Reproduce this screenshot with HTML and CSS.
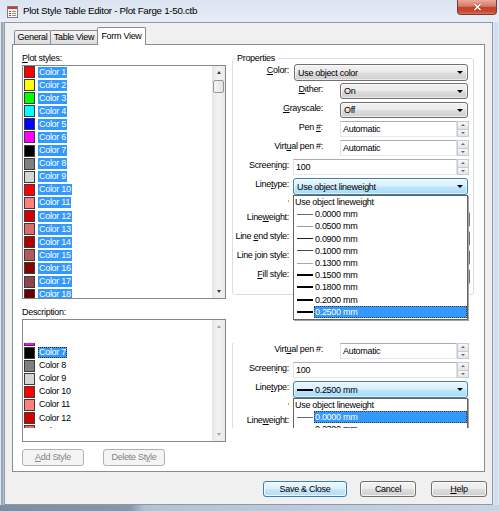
FILE: index.html
```html
<!DOCTYPE html>
<html lang="en">
<head>
<meta charset="utf-8">
<title>Plot Style Table Editor</title>
<link rel="stylesheet" href="styles.css">
</head>
<body>
<div class="window">
  <div class="titlebar">
    <svg class="app-icon" width="11" height="12" viewBox="0 0 11 12">
      <rect x="0.5" y="0.5" width="10" height="11" fill="#f7f7f7" stroke="#7d7d7d"/>
      <rect x="1" y="1" width="9" height="2" fill="#d0392a"/>
      <rect x="2" y="5" width="2" height="1" fill="#d0392a"/>
      <rect x="5" y="5" width="4" height="1" fill="#8f8f8f"/>
      <rect x="2" y="7" width="2" height="1" fill="#d0392a"/>
      <rect x="5" y="7" width="4" height="1" fill="#8f8f8f"/>
      <rect x="2" y="9" width="2" height="1" fill="#d0392a"/>
      <rect x="5" y="9" width="4" height="1" fill="#8f8f8f"/>
    </svg>
    <span class="title">Plot Style Table Editor - Plot Farge 1-50.ctb</span>
    <div class="close-btn">
      <svg width="9" height="8" viewBox="0 0 9 8"><path d="M1.5 1 L7.5 7 M7.5 1 L1.5 7" stroke="#7a2a1e" stroke-width="3" stroke-opacity="0.45"/><path d="M1.5 1 L7.5 7 M7.5 1 L1.5 7" stroke="#ffffff" stroke-width="1.6"/></svg>
    </div>
  </div>
  <div class="frame-row">
    <div class="frame-left"></div>
    <div class="client">
      <div class="tabs">
        <div class="tab tab-general">General</div>
        <div class="tab tab-table">Table View</div>
        <div class="tab tab-active">Form View</div>
      </div>
      <div class="panel">
        <div class="col-left">
          <div class="lbl"><u>P</u>lot styles:</div>
          <div class="listbox lb-main">
            <div class="list-items">
              <div class="item"><span class="sw" style="background:#ff0000"></span><span class="it sel">Color 1</span></div>
              <div class="item"><span class="sw" style="background:#ffff00"></span><span class="it sel">Color 2</span></div>
              <div class="item"><span class="sw" style="background:#00ff00"></span><span class="it sel">Color 3</span></div>
              <div class="item"><span class="sw" style="background:#00ffff"></span><span class="it sel">Color 4</span></div>
              <div class="item"><span class="sw" style="background:#0000ff"></span><span class="it sel">Color 5</span></div>
              <div class="item"><span class="sw" style="background:#ff00ff"></span><span class="it sel">Color 6</span></div>
              <div class="item"><span class="sw" style="background:#000000"></span><span class="it sel">Color 7</span></div>
              <div class="item"><span class="sw" style="background:#808080"></span><span class="it sel">Color 8</span></div>
              <div class="item"><span class="sw" style="background:#d6d6d6"></span><span class="it sel">Color 9</span></div>
              <div class="item"><span class="sw" style="background:#ff0000"></span><span class="it sel">Color 10</span></div>
              <div class="item"><span class="sw" style="background:#ff7f7f"></span><span class="it sel">Color 11</span></div>
              <div class="item"><span class="sw" style="background:#d40000"></span><span class="it sel">Color 12</span></div>
              <div class="item"><span class="sw" style="background:#dc6c6c"></span><span class="it sel">Color 13</span></div>
              <div class="item"><span class="sw" style="background:#b00000"></span><span class="it sel">Color 14</span></div>
              <div class="item"><span class="sw" style="background:#b45a5a"></span><span class="it sel">Color 15</span></div>
              <div class="item"><span class="sw" style="background:#8b0000"></span><span class="it sel">Color 16</span></div>
              <div class="item"><span class="sw" style="background:#8c4646"></span><span class="it sel">Color 17</span></div>
              <div class="item"><span class="sw" style="background:#650000"></span><span class="it sel">Color 18</span></div>
            </div>
            <div class="vscroll">
              <div class="sb-btn"><span class="ar-up"></span></div>
              <div class="sb-thumb"></div>
              <div class="sb-space"></div>
              <div class="sb-btn"><span class="ar-dn"></span></div>
            </div>
          </div>
          <div class="lbl lbl-desc">Description:</div>
          <div class="listbox lb-desc">
            <div class="list-items"></div>
            <div class="vscroll vscroll-off">
              <div class="sb-btn"><span class="ar-up"></span></div>
              <div class="sb-space"></div>
              <div class="sb-btn"><span class="ar-dn"></span></div>
            </div>
          </div>
          <div class="style-btns">
            <div class="btn btn-disabled"><u>A</u>dd Style</div>
            <div class="btn btn-disabled btn-del">Delete St<u>y</u>le</div>
          </div>
        </div>

        <fieldset class="props">
          <legend>Properties</legend>
          <div class="row"><span class="rl rl-w"><u>C</u>olor:</span><div class="combo w-color"><span>Use object color</span><span class="arr"></span></div></div>
          <div class="row"><span class="rl rl-n"><u>D</u>ither:</span><div class="combo combo-n w-n"><span>On</span><span class="arr"></span></div></div>
          <div class="row"><span class="rl rl-n"><u>G</u>rayscale:</span><div class="combo combo-n w-n"><span>Off</span><span class="arr"></span></div></div>
          <div class="row"><span class="rl rl-n">Pen <u>#</u>:</span><div class="spin w-ns"><span class="spin-field">Automatic</span><span class="spin-btns"><span><i class="sp-up"></i></span><span><i class="sp-dn"></i></span></span></div></div>
          <div class="row"><span class="rl rl-n">Virt<u>u</u>al pen #:</span><div class="spin w-ns"><span class="spin-field">Automatic</span><span class="spin-btns"><span><i class="sp-up"></i></span><span><i class="sp-dn"></i></span></span></div></div>
          <div class="row"><span class="rl rl-w">Screen<u>i</u>ng:</span><div class="spin w-ws"><span class="spin-field">100</span><span class="spin-btns"><span><i class="sp-up"></i></span><span><i class="sp-dn"></i></span></span></div></div>
          <div class="row"><span class="rl rl-w">Line<u>t</u>ype:</span>
            <div class="combo-wrap">
              <div class="combo combo-focus w-wide"><span>Use object lineweight</span><span class="arr"></span></div>
              <div class="dropdown">
                <div class="dd-item dd-first">Use object lineweight</div>
                <div class="dd-item"><span class="ln ln-a"></span><span class="dd-t">0.0000 mm</span></div>
                <div class="dd-item"><span class="ln ln-b"></span><span class="dd-t">0.0500 mm</span></div>
                <div class="dd-item"><span class="ln ln-c"></span><span class="dd-t">0.0900 mm</span></div>
                <div class="dd-item"><span class="ln ln-d"></span><span class="dd-t">0.1000 mm</span></div>
                <div class="dd-item"><span class="ln ln-e"></span><span class="dd-t">0.1300 mm</span></div>
                <div class="dd-item"><span class="ln ln-f"></span><span class="dd-t">0.1500 mm</span></div>
                <div class="dd-item"><span class="ln ln-f"></span><span class="dd-t">0.1800 mm</span></div>
                <div class="dd-item"><span class="ln ln-f"></span><span class="dd-t">0.2000 mm</span></div>
                <div class="dd-item"><span class="ln ln-f"></span><span class="dd-t dd-sel">0.2500 mm</span></div>
              </div>
            </div>
          </div>
          <div class="row row-adapt"><span class="rl rl-w adapt-mark"><i></i></span></div>
          <div class="row"><span class="rl rl-w">Line<u>w</u>eight:</span><div class="combo w-hid"><span></span><span class="arr"></span></div></div>
          <div class="row"><span class="rl rl-w">Line <u>e</u>nd style:</span><div class="combo w-hid"><span></span><span class="arr"></span></div></div>
          <div class="row"><span class="rl rl-w">Line <u>j</u>oin style:</span><div class="combo w-hid"><span></span><span class="arr"></span></div></div>
          <div class="row"><span class="rl rl-w"><u>F</u>ill style:</span><div class="combo w-hid"><span></span><span class="arr"></span></div></div>
        </fieldset>

        <div class="glitch-left">
          <div class="glitch-list">
            <div class="item"><span class="sw" style="background:#ff00ff"></span></div>
            <div class="item"><span class="sw" style="background:#000000"></span><span class="it focus">Color 7</span></div>
            <div class="item"><span class="sw" style="background:#808080"></span><span class="it">Color 8</span></div>
            <div class="item"><span class="sw" style="background:#d6d6d6"></span><span class="it">Color 9</span></div>
            <div class="item"><span class="sw" style="background:#ff0000"></span><span class="it">Color 10</span></div>
            <div class="item"><span class="sw" style="background:#ff7f7f"></span><span class="it">Color 11</span></div>
            <div class="item"><span class="sw" style="background:#d40000"></span><span class="it">Color 12</span></div>
            <div class="item"><span class="sw" style="background:#dc6c6c"></span><span class="it">Color 13</span></div>
          </div>
        </div>

        <div class="glitch-right">
          <div class="row"><span class="rl rl-n">Virt<u>u</u>al pen #:</span><div class="spin w-ns"><span class="spin-field">Automatic</span><span class="spin-btns"><span><i class="sp-up"></i></span><span><i class="sp-dn"></i></span></span></div></div>
          <div class="row"><span class="rl rl-w">Screen<u>i</u>ng:</span><div class="spin w-ws"><span class="spin-field">100</span><span class="spin-btns"><span><i class="sp-up"></i></span><span><i class="sp-dn"></i></span></span></div></div>
          <div class="row"><span class="rl rl-w">Line<u>t</u>ype:</span>
            <div class="combo-wrap">
              <div class="combo combo-focus w-wide combo-ln"><span class="ln ln-f"></span><span class="combo-t">0.2500 mm</span><span class="arr"></span></div>
              <div class="dropdown">
                <div class="dd-item dd-first">Use object lineweight</div>
                <div class="dd-item"><span class="ln ln-a"></span><span class="dd-t dd-sel">0.0000 mm</span></div>
                <div class="dd-item"><span class="ln ln-b"></span><span class="dd-t">0.2300 mm</span></div>
              </div>
            </div>
          </div>
          <div class="row row-adapt"><span class="rl rl-w adapt-mark"><i></i></span></div>
          <div class="row"><span class="rl rl-w">Line<u>w</u>eight:</span></div>
        </div>
      </div>
      <div class="actions">
        <div class="btn btn-save">Save &amp; Close</div>
        <div class="btn btn-cancel">Cancel</div>
        <div class="btn btn-help"><u>H</u>elp</div>
      </div>
    </div>
    <div class="frame-right"></div>
  </div>
  <div class="frame-bottom"></div>
</div>
</body>
</html>
```

FILE: styles.css
```css
* { box-sizing: border-box; }
html, body { margin: 0; padding: 0; }
body {
  width: 499px; height: 511px; overflow: hidden;
  font-family: "Liberation Sans", Arial, sans-serif;
  font-size: 9px; letter-spacing: -0.3px; color: #000; background: #d9e3ee;
}
u { text-decoration: underline; text-underline-offset: 1px; }

.window { width: 499px; height: 511px; display: flex; flex-direction: column; }

/* title bar */
.titlebar { flex: none; height: 22px; display: flex; align-items: flex-start; background: linear-gradient(#dae4f0, #e6edf6); }
.app-icon { flex: none; margin: 6px 0 0 7px; }
.title { margin: 5px 0 0 5px; font-size: 9.8px; line-height: 12px; white-space: nowrap; }
.close-btn {
  flex: none; margin-left: auto; margin-right: 2px; width: 40px; height: 15px;
  border: 1px solid #86362a; border-top: none; border-radius: 0 0 4px 4px;
  background: linear-gradient(#eba999, #d77b67 45%, #c3442d 52%, #c44832 80%, #d97059);
  display: flex; align-items: center; justify-content: center;
}

.frame-row { flex: 1; display: flex; min-height: 0; }
.frame-left { flex: none; width: 4px; background: linear-gradient(90deg, #dfe6ee 0 1px, #98a5b3 1px 3px, #b9c5d2 3px); }
.client { flex: none; width: 489px; background: #f0f0f0; border: 1px solid #8d99a7; display: flex; flex-direction: column; }
.frame-right { flex: 1; background: linear-gradient(90deg, #e2eaf4, #cddbea 45%, #dde7f2); }
.frame-bottom { flex: none; height: 6px; background: linear-gradient(90deg, #7e8ea2 0, #8797ab 26%, #b4c2d2 29%, #c9d5e2 100%); }

/* tabs */
.tabs { flex: none; display: flex; align-items: flex-end; height: 21px; padding: 4px 0 0 9px; }
.tab {
  flex: none; height: 14px; border: 1px solid #898c95; border-bottom: none; margin-right: -1px;
  border-radius: 2px 2px 0 0; background: linear-gradient(#f4f4f4, #e8e8e8 50%, #dcdcdc);
  line-height: 13px; text-align: center;
}
.tab-general { width: 37px; }
.tab-table { width: 48px; }
.tab-active { width: 49px; height: 18px; margin-bottom: -1px; background: #fff; position: relative; z-index: 1; line-height: 16px; }

.panel {
  flex: none; width: 473px; height: 428px; margin-left: 7px;
  border: 1px solid #898c95; background: #fff; position: relative;
  display: flex; align-items: flex-start; gap: 6px; padding: 7px 0 0 9px;
}

/* left column */
.col-left { flex: none; width: 204px; display: flex; flex-direction: column; }
.lbl { height: 13px; line-height: 13px; }
.lbl-desc { margin-top: 7px; }
.listbox { display: flex; border: 1px solid #828790; background: #fff; }
.lb-main { height: 234px; }
.lb-desc { height: 123px; }
.list-items { flex: 1; overflow: hidden; }
.item { height: 13.1px; display: flex; align-items: flex-start; white-space: nowrap; }
.sw { flex: none; width: 11px; height: 12px; margin: 0 0 0 1px; border: 1px solid #3c3c3c; }
.it { margin: 0.5px 0 0 3px; padding: 0 1px; height: 11px; line-height: 11px; }
.sel { background: #3399ff; color: #fff; }
.focus { background: #3399ff; color: #fff; outline: 1px dotted #2a2a2a; outline-offset: -1px; }

.vscroll { flex: none; width: 13px; display: flex; flex-direction: column; background: linear-gradient(90deg, #e4e4e4, #f1f1f1 40%, #f1f1f1 60%, #e8e8e8); }
.sb-btn { flex: none; height: 13px; display: flex; align-items: center; justify-content: center; }
.ar-up { width: 0; height: 0; border-left: 2.5px solid transparent; border-right: 2.5px solid transparent; border-bottom: 3px solid #3a3a3a; }
.ar-dn { width: 0; height: 0; border-left: 2.5px solid transparent; border-right: 2.5px solid transparent; border-top: 3px solid #3a3a3a; }
.vscroll-off .ar-up { border-bottom-color: #a6a6a6; }
.vscroll-off .ar-dn { border-top-color: #a6a6a6; }
.sb-thumb { flex: none; height: 13px; margin: 1px 1px 0; border: 1px solid #979797; border-radius: 2px; background: linear-gradient(90deg, #f5f5f5, #e2e2e2); }
.sb-space { flex: 1; }

.style-btns { display: flex; margin-top: 7px; }

/* buttons */
.btn {
  flex: none; height: 16px; border: 1px solid #707070; border-radius: 3px;
  background: linear-gradient(#f2f2f2, #ebebeb 48%, #dddddd 52%, #cfcfcf);
  box-shadow: inset 0 0 0 1px rgba(255,255,255,0.75);
  text-align: center; line-height: 14px; white-space: nowrap;
}
.btn-disabled { width: 62px; height: 17px; line-height: 15px; border-color: #adb2b5; background: #f4f4f4; color: #838383; box-shadow: none; }
.btn-del { margin-left: 19px; }
.btn-save { width: 84px; border-color: #3c7fb1; background: linear-gradient(#edf7fd, #dcf0fb 48%, #c5e7f8 52%, #b5ddf3); }
.btn-cancel { width: 56px; margin-left: 13px; }
.btn-help { width: 56px; margin-left: 15px; }
.actions { display: flex; justify-content: flex-end; margin-top: 9px; padding-right: 5px; }

/* properties group */
.props {
  flex: none; width: 242px; height: 243px; min-width: 0; margin: 0; padding: 0 4px 0 0;
  border: 1px solid #d5dfe5; border-radius: 3px;
}
.props legend { padding: 0 2px; margin-left: 2px; line-height: 12px; }
.row { display: flex; align-items: flex-start; height: 17px; margin-bottom: 2px; white-space: nowrap; }
.row-adapt { height: 12px; }
.rl { flex: none; text-align: right; line-height: 13px; }
.rl-w { width: 56px; margin-right: 4px; }
.rl-n { width: 90px; margin-right: 17px; }
.adapt-mark { display: flex; justify-content: flex-end; }
.adapt-mark i { width: 1px; height: 2px; margin-top: 3px; background: #e79a3c; }

.combo {
  flex: none; display: flex; align-items: center; height: 17px; padding-left: 3px;
  border: 1px solid #707070; border-radius: 3px;
  background: linear-gradient(#f2f2f2, #ebebeb 48%, #dddddd 52%, #cfcfcf);
  box-shadow: inset 0 0 0 1px rgba(255,255,255,0.6);
}
.combo .arr { margin-left: auto; margin-right: 4px; width: 0; height: 0; border-left: 3px solid transparent; border-right: 3px solid transparent; border-top: 3px solid #000; }
.combo-n { height: 16px; }
.combo-focus { border-color: #3c7fb1; background: linear-gradient(#eaf6fd, #d9f0fc 48%, #bee6fd 52%, #a9daf5); }
.combo-ln { padding-left: 0; }
.combo-t { margin-left: 2px; }
.w-color { width: 174px; margin-left: 1px; }
.w-n { width: 128px; }
.w-wide { width: 175px; }
.w-hid { width: 177px; }
.combo-wrap { flex: none; position: relative; }

.spin { flex: none; display: flex; height: 16px; }
.w-ns { width: 129px; }
.w-ws { width: 176px; }
.spin-field { flex: 1; border: 1px solid; border-color: #abadb3 #dbdfe6 #e3e9ef #e2e3ea; background: #fff; padding-left: 2px; line-height: 14px; }
.spin-btns { flex: none; width: 12px; display: flex; flex-direction: column; }
.spin-btns span { flex: 1; display: flex; align-items: center; justify-content: center; border: 1px solid #c6cad1; background: linear-gradient(#f8f8f8, #e5e5e5); }
.spin-btns span + span { border-top: none; }
.sp-up { width: 0; height: 0; border-left: 2px solid transparent; border-right: 2px solid transparent; border-bottom: 2px solid #56688a; }
.sp-dn { width: 0; height: 0; border-left: 2px solid transparent; border-right: 2px solid transparent; border-top: 2px solid #56688a; }

/* dropdown list */
.dropdown {
  position: absolute; top: 100%; left: 0; width: 100%; z-index: 5;
  background: #fff; border: 1px solid #646464; padding-bottom: 1px;
  box-shadow: 1px 1px 0 #a5a5a5;
}
.dd-item { height: 12.2px; display: flex; align-items: center; white-space: nowrap; }
.dd-first { padding-left: 1px; }
.ln { flex: none; width: 16px; height: 1px; margin-left: 3px; background: #000; }
.ln-a { background: #6a6a6a; }
.ln-b { background: #9c9c9c; }
.ln-c { background: #1c1c1c; }
.ln-d { background: #4a4a4a; }
.ln-e { background: #a8a8a8; }
.ln-f { height: 2px; background: #000; }
.dd-t { flex: 1; margin-left: 1px; padding-left: 1px; height: 12px; line-height: 12px; }
.dd-sel { background: #3399ff; color: #fff; outline: 1px dotted #3a3a3a; outline-offset: -1px; }

/* redraw glitch copies painted over the dialog */
.glitch-left { position: absolute; left: 10px; top: 298px; width: 189px; height: 85px; overflow: hidden; background: #fff; }
.glitch-list { margin-top: -9.5px; }
.glitch-right { position: absolute; left: 219px; top: 298px; width: 238px; height: 85px; overflow: hidden; background: #fff; border-left: 1px solid #d5dfe5; }
```
